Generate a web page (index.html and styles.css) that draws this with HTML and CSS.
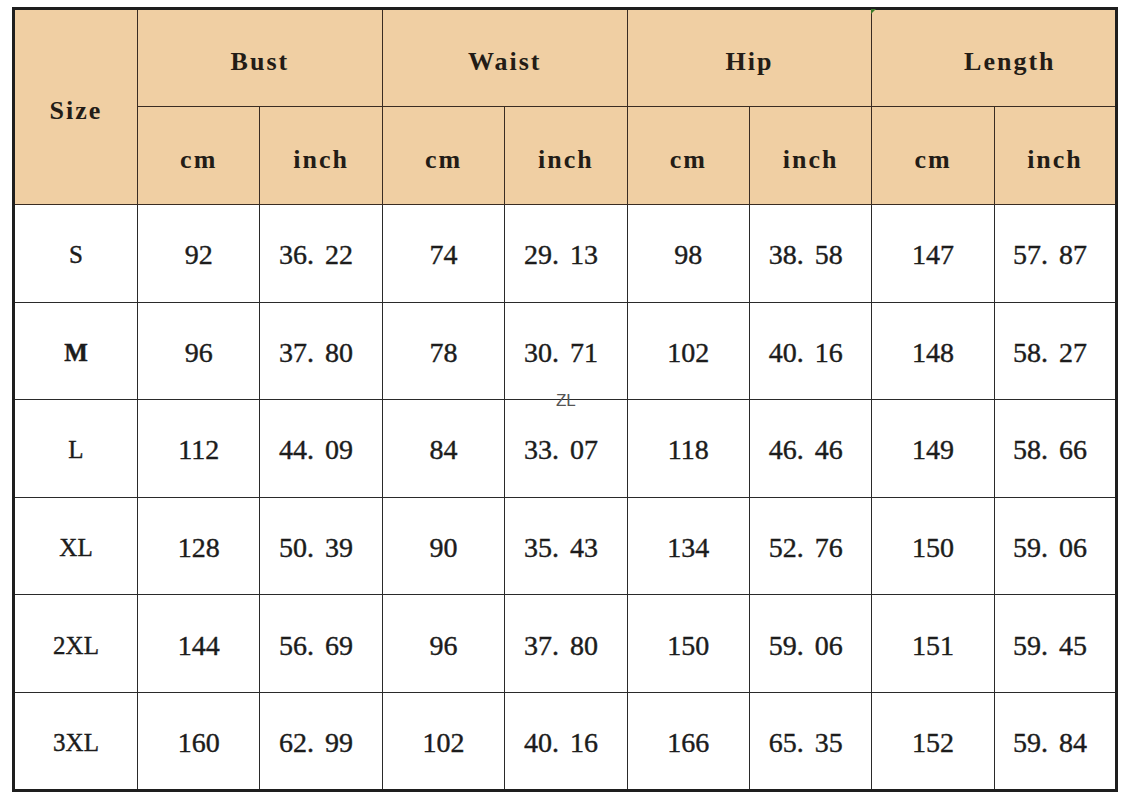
FILE: index.html
```html
<!DOCTYPE html>
<html>
<head>
<meta charset="utf-8">
<link rel="stylesheet" href="styles.css">
</head>
<body>
<div class="wrap">
<table class="chart">
  <colgroup>
    <col class="c-size">
    <col><col><col><col><col><col><col><col>
  </colgroup>
  <thead>
    <tr class="hrow">
      <th rowspan="2" class="hd">Size</th>
      <th colspan="2" class="hd">Bust</th>
      <th colspan="2" class="hd">Waist</th>
      <th colspan="2" class="hd">Hip</th>
      <th colspan="2" class="hd len">Length<span class="mark"></span></th>
    </tr>
    <tr class="hrow">
      <th class="hd">cm</th><th class="hd">inch</th>
      <th class="hd">cm</th><th class="hd">inch</th>
      <th class="hd">cm</th><th class="hd">inch</th>
      <th class="hd">cm</th><th class="hd">inch</th>
    </tr>
  </thead>
  <tbody>
    <tr><td class="sz">S</td><td>92</td><td class="dec">36. 22</td><td>74</td><td class="dec">29. 13</td><td>98</td><td class="dec">38. 58</td><td>147</td><td class="dec">57. 87</td></tr>
    <tr><td class="sz bold">M</td><td>96</td><td class="dec">37. 80</td><td>78</td><td class="dec">30. 71</td><td>102</td><td class="dec">40. 16</td><td>148</td><td class="dec">58. 27</td></tr>
    <tr><td class="sz">L</td><td>112</td><td class="dec">44. 09</td><td>84</td><td class="dec wm-cell">33. 07<span class="wm">ZL</span></td><td>118</td><td class="dec">46. 46</td><td>149</td><td class="dec">58. 66</td></tr>
    <tr><td class="sz">XL</td><td>128</td><td class="dec">50. 39</td><td>90</td><td class="dec">35. 43</td><td>134</td><td class="dec">52. 76</td><td>150</td><td class="dec">59. 06</td></tr>
    <tr><td class="sz">2XL</td><td>144</td><td class="dec">56. 69</td><td>96</td><td class="dec">37. 80</td><td>150</td><td class="dec">59. 06</td><td>151</td><td class="dec">59. 45</td></tr>
    <tr><td class="sz">3XL</td><td>160</td><td class="dec">62. 99</td><td>102</td><td class="dec">40. 16</td><td>166</td><td class="dec">65. 35</td><td>152</td><td class="dec">59. 84</td></tr>
  </tbody>
</table>
</div>
</body>
</html>
```
FILE: styles.css
```css
html, body {
  margin: 0;
  padding: 0;
  background: #ffffff;
}
.wrap {
  padding: 7px 0 0 12px;
}
.chart {
  border-collapse: collapse;
  table-layout: fixed;
  width: 1103px;
  border: 3px solid #1e1e1e;
  color: #1f1f1f;
}
.chart col { width: 122.4px; }
.chart col.c-size { width: 124px; }
.chart th, .chart td {
  border: 1px solid #2a2a2a;
  text-align: center;
  vertical-align: middle;
  padding: 0;
}
.chart th { border-color: #3a2c22; }
.hrow { height: 98px; }
.chart tbody tr { height: 97.6px; }
.chart .hd {
  background: #f0cfa3;
  font-family: "Liberation Serif", "Times New Roman", serif;
  font-weight: bold;
  font-size: 26px;
  letter-spacing: 2px;
  color: #231c16;
  padding-top: 8px;
}
.chart .len {
  position: relative;
  padding-left: 32px;
}
.mark {
  position: absolute;
  left: -1px;
  top: -1px;
  width: 0;
  height: 0;
  border-top: 5px solid #3c7a2a;
  border-right: 5px solid transparent;
}
.chart td {
  font-family: "Liberation Serif", "Times New Roman", serif;
  font-size: 28px;
  word-spacing: 4px;
  color: #1c1c1c;
  -webkit-text-stroke: 0.4px #1c1c1c;
  padding-top: 4px;
}
.chart td.dec { padding-right: 10px; }
.chart td.sz {
  font-size: 25px;
}
.chart td.bold { font-weight: bold; }
.wm-cell { position: relative; }
.wm {
  position: absolute;
  left: 50%;
  top: -9px;
  transform: translateX(-50%);
  font-family: "Liberation Sans", Arial, sans-serif;
  font-size: 17px;
  color: #555;
  word-spacing: 0;
  -webkit-text-stroke: 0;
}
```
